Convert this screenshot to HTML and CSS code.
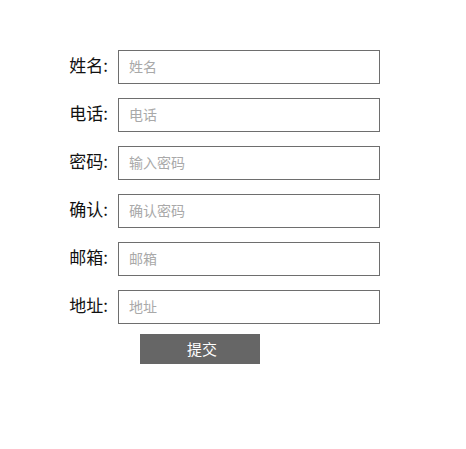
FILE: index.html
```html
<!DOCTYPE html>
<html lang="zh">
<head>
<meta charset="utf-8">
<link rel="stylesheet" href="styles.css">
</head>
<body>
<form class="form">
  <div class="row"><label class="label">姓名:</label><input class="field" placeholder="姓名"></div>
  <div class="row"><label class="label">电话:</label><input class="field" placeholder="电话"></div>
  <div class="row"><label class="label">密码:</label><input class="field" type="password" placeholder="输入密码"></div>
  <div class="row"><label class="label">确认:</label><input class="field" type="password" placeholder="确认密码"></div>
  <div class="row"><label class="label">邮箱:</label><input class="field" placeholder="邮箱"></div>
  <div class="row"><label class="label">地址:</label><input class="field" placeholder="地址"></div>
  <div class="actions"><button type="button" class="submit">提交</button></div>
</form>
</body>
</html>
```
FILE: styles.css
```css
html, body {
  margin: 0;
  padding: 0;
  background: #fff;
}
body {
  font-family: "Noto Sans CJK SC", "Noto Sans", sans-serif;
}
.form {
  padding-top: 50px;
  padding-left: 58px;
  display: flex;
  flex-direction: column;
  gap: 14px;
}
.row {
  display: flex;
  align-items: center;
  gap: 10px;
  height: 34px;
}
.label {
  width: 50px;
  text-align: right;
  font-size: 17px;
  color: #111;
  line-height: 30px;
  padding-bottom: 4px;
}
.field {
  box-sizing: border-box;
  width: 262px;
  height: 34px;
  margin: 0;
  border: 1px solid #6e6e6e;
  border-radius: 0;
  padding: 0 10px 3px;
  font-family: inherit;
  font-size: 14px;
  color: #333;
  outline: none;
}
.field::placeholder {
  color: #a9a9a9;
}
.actions {
  display: flex;
  padding-left: 82px;
  margin-top: -4px;
}
.submit {
  width: 120px;
  height: 30px;
  border: none;
  border-radius: 0;
  background: #666;
  color: #fff;
  font-family: inherit;
  font-size: 15px;
  padding: 0 0 2px 4px;
}
```
